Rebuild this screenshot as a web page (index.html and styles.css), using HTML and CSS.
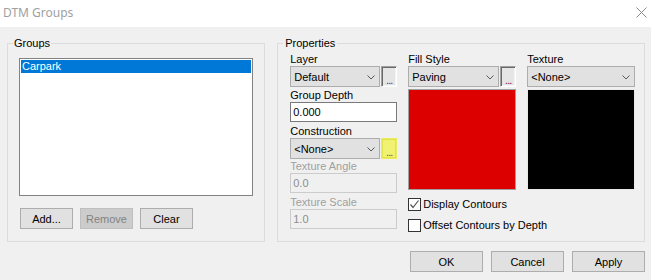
FILE: index.html
```html
<!DOCTYPE html>
<html>
<head>
<meta charset="utf-8">
<link rel="stylesheet" href="styles.css">
</head>
<body>
<div class="window">
  <div class="titlebar">
    <span class="title">DTM Groups</span>
    <svg class="close" width="11" height="11" viewBox="0 0 11 11"><path d="M0.5 0.5 L10.5 10.5 M10.5 0.5 L0.5 10.5" stroke="#8a8a8a" stroke-width="1" fill="none"/></svg>
  </div>
  <div class="body">
    <div class="groups-row">
      <fieldset class="group group-groups">
        <legend>Groups</legend>
        <div class="listbox"><div class="item selected">Carpark</div></div>
        <div class="btnrow">
          <button class="btn small">Add...</button>
          <button class="btn small disabled">Remove</button>
          <button class="btn small">Clear</button>
        </div>
      </fieldset>
      <fieldset class="group group-props">
        <legend>Properties</legend>
        <div class="props-grid">
          <div class="col col1">
            <div class="lbl">Layer</div>
            <div class="combo-row">
              <div class="combo w90"><span>Default</span><svg class="chev" width="8" height="5" viewBox="0 0 8 5"><path d="M0.5 0.5 L4 4 L7.5 0.5" stroke="#5a5a5a" fill="none"/></svg></div>
              <div class="ellip">...</div>
            </div>
            <div class="lbl m2">Group Depth</div>
            <div class="textbox">0.000</div>
            <div class="lbl m3">Construction</div>
            <div class="combo-row">
              <div class="combo w90"><span>&lt;None&gt;</span><svg class="chev" width="8" height="5" viewBox="0 0 8 5"><path d="M0.5 0.5 L4 4 L7.5 0.5" stroke="#5a5a5a" fill="none"/></svg></div>
              <div class="ellip yellow">...</div>
            </div>
            <div class="lbl m1 dis">Texture Angle</div>
            <div class="textbox disabled">0.0</div>
            <div class="lbl m3 dis">Texture Scale</div>
            <div class="textbox disabled">1.0</div>
          </div>
          <div class="col col2">
            <div class="lbl">Fill Style</div>
            <div class="combo-row">
              <div class="combo w91"><span>Paving</span><svg class="chev" width="8" height="5" viewBox="0 0 8 5"><path d="M0.5 0.5 L4 4 L7.5 0.5" stroke="#5a5a5a" fill="none"/></svg></div>
              <div class="ellip">...</div>
            </div>
            <div class="swatch red"></div>
          </div>
          <div class="col col3">
            <div class="lbl">Texture</div>
            <div class="combo full"><span>&lt;None&gt;</span><svg class="chev" width="8" height="5" viewBox="0 0 8 5"><path d="M0.5 0.5 L4 4 L7.5 0.5" stroke="#5a5a5a" fill="none"/></svg></div>
            <div class="swatch black"></div>
          </div>
          <div class="checks">
            <label class="check"><span class="box"><svg width="11" height="11" viewBox="0 0 11 11"><path d="M1.5 5.5 L4 8.5 L9.5 1.5" stroke="#555" stroke-width="1.2" fill="none"/></svg></span>Display Contours</label>
            <label class="check"><span class="box"></span>Offset Contours by Depth</label>
          </div>
        </div>
      </fieldset>
    </div>
    <div class="dialog-buttons">
      <button class="btn big">OK</button>
      <button class="btn big">Cancel</button>
      <button class="btn big">Apply</button>
    </div>
  </div>
</div>
</body>
</html>
```

FILE: styles.css
```css
* { box-sizing: border-box; }
html, body { margin: 0; padding: 0; }
body {
  width: 651px;
  height: 280px;
  background: #f0f0f0;
  font-family: "Liberation Sans", Arial, sans-serif;
  font-size: 11px;
  color: #000;
  overflow: hidden;
}
.window { width: 651px; height: 280px; display: flex; flex-direction: column; }
.titlebar {
  height: 27px;
  background: #fff;
  display: flex;
  align-items: center;
  justify-content: space-between;
  padding: 0 4px 0 3px;
}
.title {
  font-family: "Noto Sans", "Open Sans", sans-serif;
  font-size: 12px;
  color: #a0a0a0;
  margin-top: -2px;
}
.close { margin-right: 0; margin-top: -2px; }
.body { padding: 10px 6px 0 7px; }
.groups-row { display: flex; gap: 12px; }
.group {
  margin: 0;
  padding: 0;
  border: 1px solid #dcdcdc;
  min-width: 0;
  height: 205px;
}
.group legend {
  margin-left: 5px;
  padding: 0 1px;
  line-height: 13px;
  font-size: 11px;
}
.group-groups { width: 259px; padding: 0 12px 0 11px; }
.group-groups legend { margin-left: -6px; }
.group-props { width: 369px; padding: 3px 0 0 12px; }
.group-props legend { margin-left: -7px; padding: 0 2px; }
.listbox {
  margin-top: 8px;
  width: 234px;
  height: 138px;
  background: #fff;
  border: 1px solid #828282;
  padding: 1px;
}
.item { height: 13px; line-height: 13px; padding-left: 1px; }
.item.selected { background: #0078d7; color: #fff; }
.btnrow { display: flex; gap: 7px; margin-top: 12px; padding-left: 1px; }
.btn {
  font-family: "Liberation Sans", Arial, sans-serif;
  font-size: 11px;
  color: #000;
  background: #e1e1e1;
  border: 1px solid #adadad;
  padding: 0;
  margin: 0;
  height: 21px;
}
.btn.small { width: 53px; }
.btn.big { width: 73px; }
.btn.disabled { background: #cccccc; border-color: #bfbfbf; color: #838383; }
.dialog-buttons { display: flex; justify-content: flex-end; gap: 8px; margin-top: 9px; padding-right: 0; }
.props-grid {
  display: grid;
  grid-template-columns: 107px 108px 108px;
  column-gap: 11px;
  grid-template-rows: auto auto;
  align-items: start;
}
.col1 { grid-column: 1; grid-row: 1 / span 2; display: flex; flex-direction: column; }
.col2 { grid-column: 2; grid-row: 1; display: flex; flex-direction: column; }
.col3 { grid-column: 3; grid-row: 1; display: flex; flex-direction: column; }
.lbl { line-height: 13px; height: 13px; white-space: nowrap; }
.lbl.m1 { margin-top: 1px; }
.lbl.m2 { margin-top: 2px; }
.lbl.m3 { margin-top: 3px; }
.lbl.dis { color: #a0a0a0; }
.combo-row { display: flex; gap: 1px; }
.combo {
  height: 21px;
  background: #e1e1e1;
  border: 1px solid #adadad;
  display: flex;
  align-items: center;
  justify-content: space-between;
  padding: 0 4px 0 3px;
}
.combo.w90 { width: 90px; }
.combo.w91 { width: 91px; }
.combo.full { width: 108px; }
.chev { margin-top: 1px; }
.ellip {
  width: 16px;
  height: 21px;
  border: 1px solid;
  border-color: #a0a0a0 #ffffff #ffffff #a0a0a0;
  background: #e5e5e5;
  box-shadow: inset 1px 1px 0 #696969, inset -1px -1px 0 #f4f4f4;
  color: #6a1a7a;
  font-size: 11px;
  line-height: 13px;
  text-align: center;
  padding-top: 7px;
  letter-spacing: -1px;
}
.ellip.yellow {
  background: #f2f272;
  border-color: #ecec5a;
  box-shadow: inset 0 0 0 1px #e2e24a;
  color: #8a4a20;
}
.textbox {
  width: 107px;
  height: 20px;
  background: #fff;
  border: 1px solid #7a7a7a;
  line-height: 18px;
  padding-left: 2px;
  font-size: 11px;
}
.textbox.disabled { background: #f0f0f0; border-color: #cccccc; color: #8d8d8d; }
.swatch { margin-top: 2px; width: 108px; height: 101px; }
.swatch.red {
  border: 1px solid #a0a0a0;
  background: #dc0000;
}
.swatch.black { background: #000; border: 1px solid #e8e8e8; }
.checks { grid-column: 2 / span 2; grid-row: 2; display: flex; flex-direction: column; gap: 8px; margin-top: 8px; }
.check { display: flex; align-items: center; height: 13px; line-height: 13px; white-space: nowrap; }
.box {
  width: 13px;
  height: 13px;
  border: 1px solid #333;
  background: #fff;
  margin-right: 2px;
  display: flex;
}
```
